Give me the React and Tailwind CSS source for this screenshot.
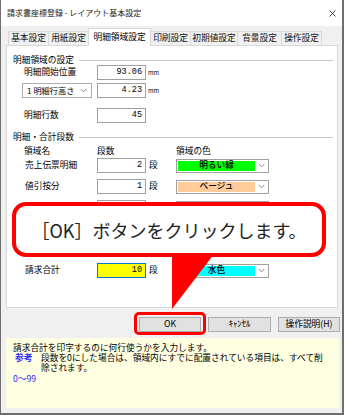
const TABS = [
  { label: '基本設定', w: 'w-[41px]' },
  { label: '用紙設定', w: 'w-[41px]' },
  { label: '明細領域設定', w: 'w-[63px]', active: true },
  { label: '印刷設定', w: 'w-[41px]' },
  { label: '初期値設定', w: 'w-[48px]' },
  { label: '背景設定', w: 'w-[45px]' },
  { label: '操作設定', w: 'w-[41px]' },
];

// rows 3-5 sit under the callout, so they carry no visible text
const ROWS = [
  { id: 'a', name: '売上伝票明細', value: '2', color: '明るい緑', fill: 'bg-[#00ff00]' },
  { id: 'b', name: '値引按分', value: '1', color: 'ベージュ', fill: 'bg-[#ffcc99]' },
  { id: 'c', name: '', value: '', color: '', fill: 'bg-white' },
  { id: 'd', name: '', value: '', color: '', fill: 'bg-white' },
  { id: 'e', name: '', value: '', color: '', fill: 'bg-white' },
];

function Chevron() {
  return (
    <svg width="7" height="5" viewBox="0 0 7 5" className="shrink-0">
      <path d="M0.6 0.9 L3.5 3.8 L6.4 0.9" fill="none" stroke="#7a7a7a" strokeWidth="0.9" />
    </svg>
  );
}

function NumBox({ value, focused }) {
  return (
    <div
      className={
        focused
          ? 'w-[49px] h-[15px] border border-[#0078d7] bg-[#ffff00] flex items-center justify-end pr-[3px]'
          : 'w-[49px] h-[15px] border border-[#a0a0a0] bg-white flex items-center justify-end pr-[3px]'
      }
    >
      <span className="font-['Liberation_Mono',monospace] text-[8.5px] leading-none">{value}</span>
    </div>
  );
}

function ColorBox({ label, fill }) {
  return (
    <div className="w-[93px] h-[14px] border border-[#a0a0a0] bg-white flex items-center p-[1px]">
      <div className={`w-[77px] h-full ${fill} flex items-center justify-center`}>
        <span className="text-[8.7px] leading-none font-medium">{label}</span>
      </div>
      <div className="flex-1 flex justify-center">
        <Chevron />
      </div>
    </div>
  );
}

function GroupHeader({ title }) {
  return (
    <div className="flex items-center h-[10px] pl-[6px] pr-[4px]">
      <span className="whitespace-nowrap leading-none">{title}</span>
      <div className="flex-1 ml-[5px] h-px bg-[#c8c8c8]" />
    </div>
  );
}

function CountRow({ name, value, color, fill, focused }) {
  return (
    <div className="flex items-center h-[15px] pl-[18px]">
      <span className="w-[72px] leading-none whitespace-nowrap">{name}</span>
      <NumBox value={value} focused={focused} />
      <span className="w-[30px] pl-[3px] leading-none">{name ? '段' : ''}</span>
      <ColorBox label={color} fill={fill} />
    </div>
  );
}

export default function App() {
  return (
    <div className="relative w-[344px] h-[415px] overflow-hidden flex flex-col bg-[#f0f0f0] border-l border-r-2 border-b-2 border-[#6e6e6e] font-['Noto_Sans_CJK_JP',sans-serif] text-[8.7px] text-black">
      {/* Title bar */}
      <div className="h-[26px] shrink-0 bg-white flex items-center justify-between pl-[6px] pr-[6px]">
        <span className="text-[8px] leading-none text-[#222]">請求書座標登録 - レイアウト基本設定</span>
        <svg width="7" height="7" viewBox="0 0 7 7">
          <path d="M0.5 0.5 L6.5 6.5 M6.5 0.5 L0.5 6.5" stroke="#333" strokeWidth="0.9" />
        </svg>
      </div>

      {/* Tabs */}
      <div className="mt-[2px] h-[18px] shrink-0 flex items-end pl-[7px]">
        {TABS.map((t) =>
          t.active ? (
            <div
              key={t.label}
              className={`${t.w} relative z-10 -ml-px h-[18px] bg-white border border-b-0 border-[#d9d9d9] flex items-center justify-center leading-none`}
            >
              {t.label}
            </div>
          ) : (
            <div
              key={t.label}
              className={`${t.w} -ml-px first:ml-0 mb-px h-[14px] bg-[#f0f0f0] border border-b-0 border-[#d9d9d9] flex items-center justify-center leading-none text-[#111]`}
            >
              {t.label}
            </div>
          )
        )}
      </div>

      {/* Tab panel */}
      <div className="-mt-px ml-[5px] w-[332px] h-[263px] shrink-0 bg-white border border-[#d9d9d9] flex flex-col">
        <div className="mt-[9px]">
          <GroupHeader title="明細領域の設定" />
        </div>
        <div className="flex items-center h-[15px] pl-[17px]">
          <span className="w-[73px] leading-none">明細開始位置</span>
          <NumBox value="93.06" />
          <span className="ml-[2px] text-[6px] leading-none">mm</span>
        </div>
        <div className="mt-[3px] flex items-center h-[15px] pl-[15px]">
          <div className="w-[70px] h-[15px] border border-[#adadad] bg-white flex items-center pl-[4px] pr-[4px]">
            <span className="text-[8.2px] leading-none whitespace-nowrap">1 明細行高さ</span>
            <span className="flex-1" />
            <Chevron />
          </div>
          <div className="ml-[5px]">
            <NumBox value="4.23" />
          </div>
          <span className="ml-[2px] text-[6px] leading-none">mm</span>
        </div>
        <div className="mt-[10px] flex items-center h-[15px] pl-[17px]">
          <span className="w-[73px] leading-none">明細行数</span>
          <NumBox value="45" />
        </div>

        <div className="mt-[9px]">
          <GroupHeader title="明細・合計段数" />
        </div>
        <div className="mt-[4px] h-[10px] flex items-center pl-[17px] leading-none">
          <span className="w-[73px]">領域名</span>
          <span className="w-[79px]">段数</span>
          <span>領域の色</span>
        </div>
        <div className="mt-[2px] flex flex-col gap-[6px]">
          {ROWS.map((r) => (
            <CountRow key={r.id} {...r} />
          ))}
          <CountRow name="請求合計" value="10" color="水色" fill="bg-[#00ffff]" focused />
        </div>
      </div>

      {/* Buttons */}
      <div className="mt-[9px] h-[15px] shrink-0 flex items-center pl-[138px] gap-[7px]">
        <button className="w-[62px] h-[15px] bg-[#e1e1e1] border border-[#adadad] leading-none">OK</button>
        <button className="w-[63px] h-[15px] bg-[#e1e1e1] border border-[#adadad] leading-none">ｷｬﾝｾﾙ</button>
        <button className="w-[62px] h-[15px] bg-[#e1e1e1] border border-[#adadad] leading-none">操作説明(H)</button>
      </div>

      {/* Help pane */}
      <div className="mt-[6px] ml-[5px] w-[333px] h-[70px] shrink-0 bg-[#ffffe1] pl-[7px] pt-[5px] leading-[10px]">
        <div className="whitespace-nowrap">請求合計を印字するのに何行使うかを入力します。</div>
        <div className="flex">
          <span className="w-[28px] pl-[2px] font-bold text-[#2a2aff]">参考</span>
          <div className="whitespace-nowrap">
            <div>段数を0にした場合は、領域内にすでに配置されている項目は、すべて削</div>
            <div>除されます。</div>
          </div>
        </div>
        <div className="mt-px text-[#2a2aff]">0～99</div>
      </div>

      {/* Callout */}
      <div className="absolute left-[11px] top-[202px] w-[314px] h-[55px] bg-white border-[4px] border-[#ff0000] rounded-[14px] flex items-center justify-center">
        <span className="text-[18px] leading-none text-[#222] whitespace-nowrap">［OK］ボタンをクリックします。</span>
      </div>
      <svg className="absolute left-[171px] top-[254px]" width="44" height="56" viewBox="0 0 44 56">
        <polygon points="0,0 42,0 0,55" fill="#ff0000" />
      </svg>
      <div className="absolute left-[133px] top-[312px] w-[72px] h-[23px] border-[3px] border-[#ff0000] rounded-[5px]" />
    </div>
  );
}
